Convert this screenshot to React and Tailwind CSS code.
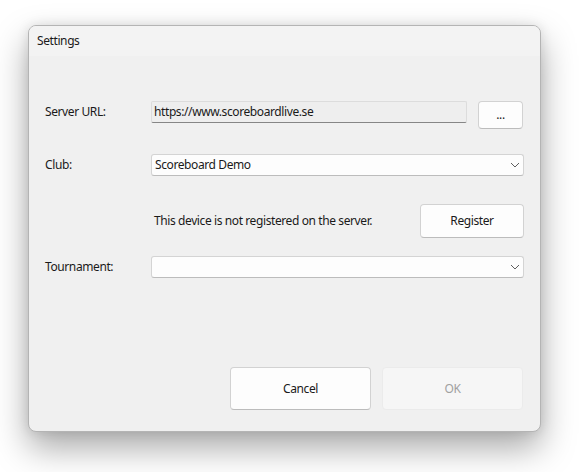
const font = { fontFamily: '"Noto Sans", "Open Sans", sans-serif', letterSpacing: '-0.4px' }

function Chevron() {
  return (
    <svg width="10" height="6" viewBox="0 0 10 6" className="shrink-0">
      <path d="M1 1l4 4 4-4" fill="none" stroke="#5f5f5f" strokeWidth="1" />
    </svg>
  )
}

function ComboBox({ value }) {
  return (
    <div className="flex h-[22px] flex-1 items-center justify-between rounded-[3px] border border-[#d4d4d4] border-b-[#bcbcbc] bg-[#fdfdfd] pl-[3px] pr-[3px] text-[12px] text-[#1a1a1a]">
      <span>{value}</span>
      <Chevron />
    </div>
  )
}

function PushButton({ children, className = '', disabled }) {
  return (
    <button
      type="button"
      disabled={disabled}
      className={`flex items-center justify-center rounded-[4px] border text-[12px] ${
        disabled
          ? 'border-[#ebebeb] bg-[#f6f6f6] text-[#a0a0a0]'
          : 'border-[#d2d2d2] border-b-[#bcbcbc] bg-[#fdfdfd] text-[#1a1a1a]'
      } ${className}`}
    >
      {children}
    </button>
  )
}

export default function App() {
  return (
    <div className="min-h-[472px] bg-white pl-[28px] pt-[25px]" style={font}>
      <div className="w-[513px] overflow-hidden rounded-[8px] border border-[#b4b4b4] bg-[#f0f0f0] shadow-[0_16px_34px_rgba(0,0,0,0.34),0_0_12px_rgba(0,0,0,0.1)]">
        <div className="flex h-[30px] items-center bg-[#f3f3f3] pl-[8px] text-[12px] text-[#1a1a1a]">Settings</div>

        <div className="pb-[21px] pl-[16px] pr-[16px] text-[12px] text-[#1a1a1a]">
          <div className="mt-[45px] flex items-start">
            <div className="flex h-[22px] w-[106px] items-center">Server URL:</div>
            <div className="flex h-[22px] flex-1 items-center rounded-[2px] border border-[#dcdcdc] border-b-[#868686] bg-[#eeeeee] pl-[2px]">
              https://www.scoreboardlive.se
            </div>
            <PushButton className="ml-[11px] mr-[1px] h-[28px] w-[45px]">...</PushButton>
          </div>

          <div className="mt-[25px] flex items-center">
            <div className="w-[106px]">Club:</div>
            <ComboBox value="Scoreboard Demo" />
          </div>

          <div className="mt-[28px] flex items-center">
            <div className="flex-1 pl-[109px]">This device is not registered on the server.</div>
            <PushButton className="h-[34px] w-[104px]">Register</PushButton>
          </div>

          <div className="mt-[18px] flex items-center">
            <div className="w-[106px]">Tournament:</div>
            <ComboBox value="" />
          </div>

          <div className="mt-[89px] flex justify-end gap-[11px] pr-[1px]">
            <PushButton className="h-[43px] w-[141px]">Cancel</PushButton>
            <PushButton className="h-[43px] w-[141px]" disabled>OK</PushButton>
          </div>
        </div>
      </div>
    </div>
  )
}
